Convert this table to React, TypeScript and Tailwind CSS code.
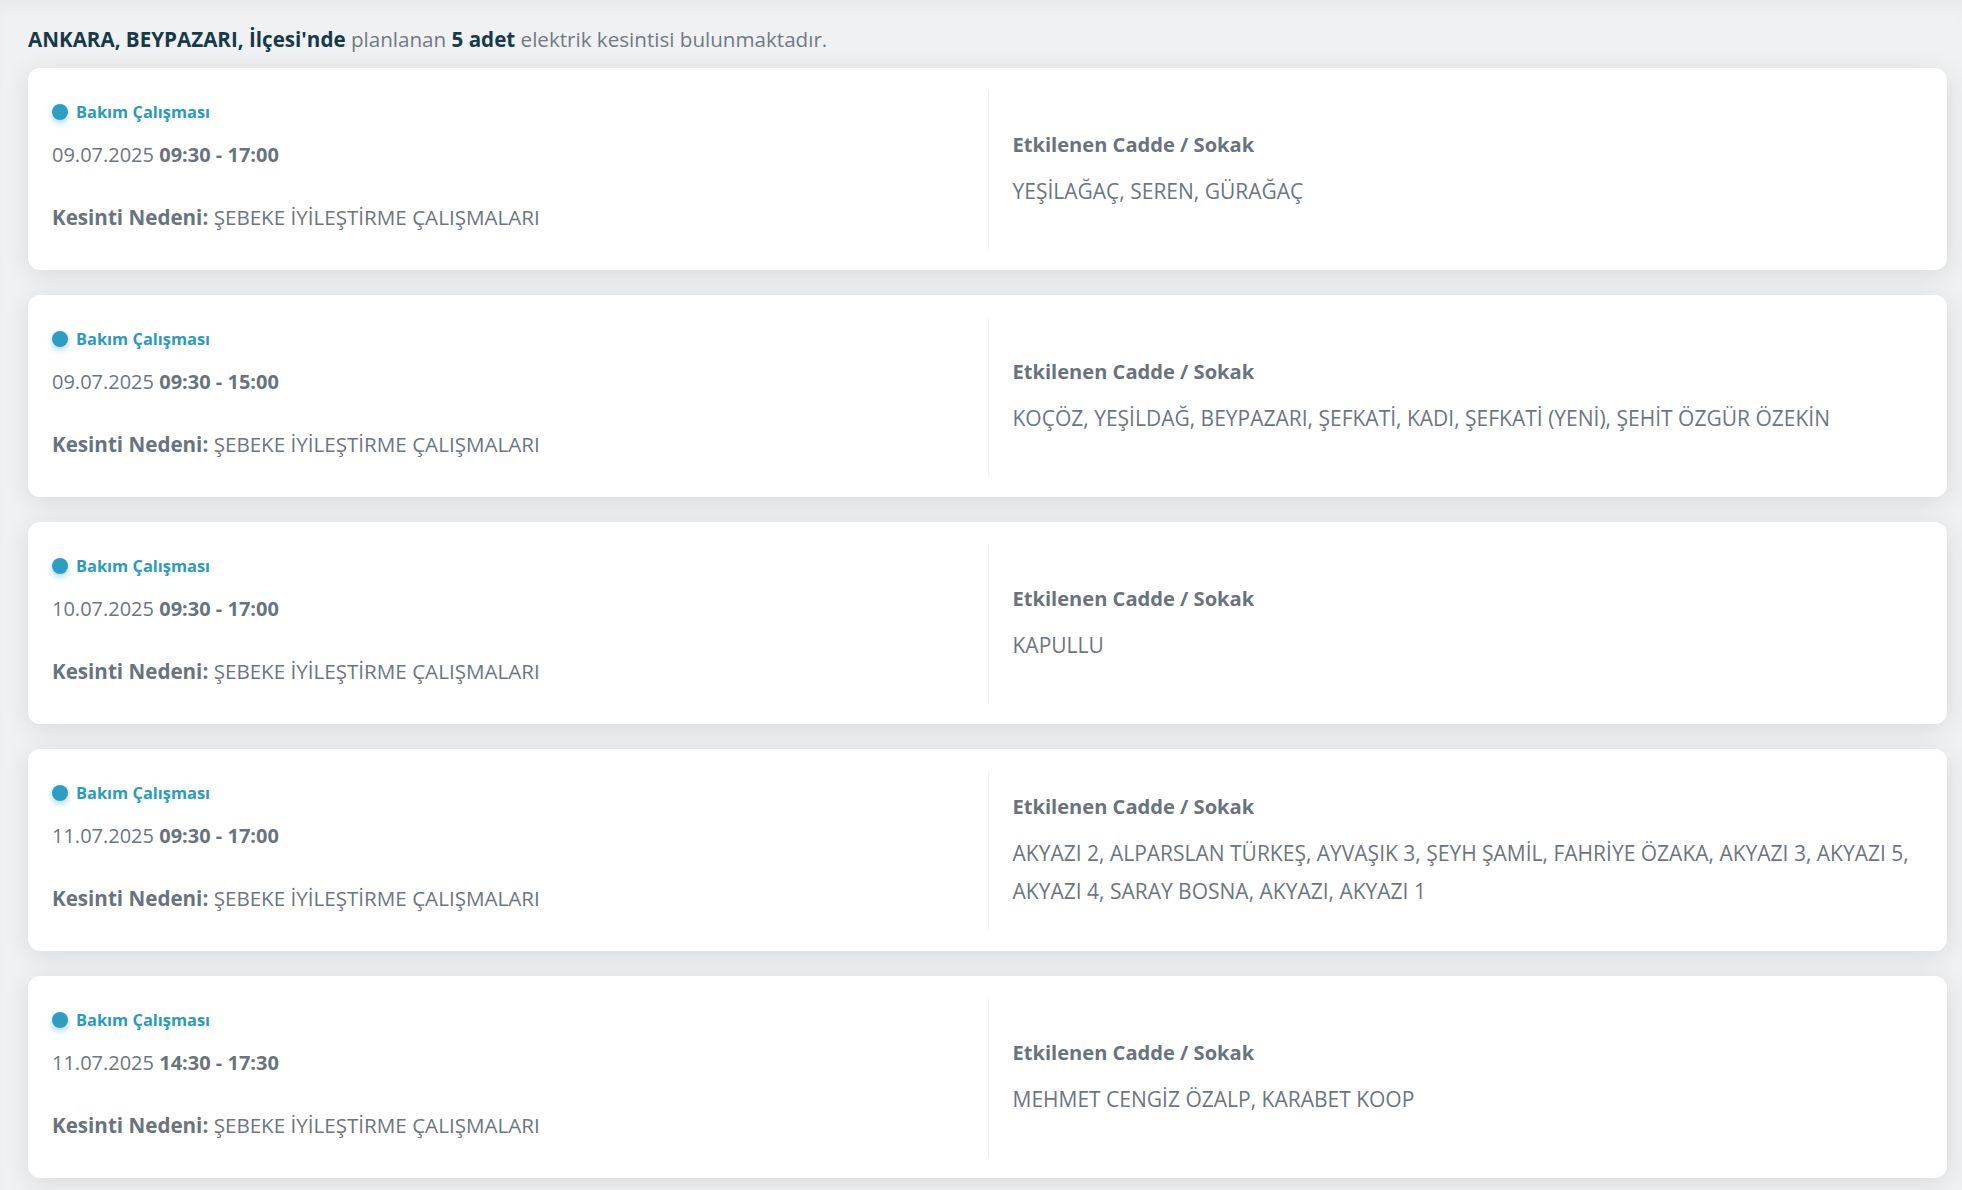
type Outage = {
  date: string;
  time: string;
  reason: string;
  streets: string;
};

const outages: Outage[] = [
  {
    date: "09.07.2025",
    time: "09:30 - 17:00",
    reason: "ŞEBEKE İYİLEŞTİRME ÇALIŞMALARI",
    streets: "YEŞİLAĞAÇ, SEREN, GÜRAĞAÇ",
  },
  {
    date: "09.07.2025",
    time: "09:30 - 15:00",
    reason: "ŞEBEKE İYİLEŞTİRME ÇALIŞMALARI",
    streets: "KOÇÖZ, YEŞİLDAĞ, BEYPAZARI, ŞEFKATİ, KADI, ŞEFKATİ (YENİ), ŞEHİT ÖZGÜR ÖZEKİN",
  },
  {
    date: "10.07.2025",
    time: "09:30 - 17:00",
    reason: "ŞEBEKE İYİLEŞTİRME ÇALIŞMALARI",
    streets: "KAPULLU",
  },
  {
    date: "11.07.2025",
    time: "09:30 - 17:00",
    reason: "ŞEBEKE İYİLEŞTİRME ÇALIŞMALARI",
    streets:
      "AKYAZI 2, ALPARSLAN TÜRKEŞ, AYVAŞIK 3, ŞEYH ŞAMİL, FAHRİYE ÖZAKA, AKYAZI 3, AKYAZI 5, AKYAZI 4, SARAY BOSNA, AKYAZI, AKYAZI 1",
  },
  {
    date: "11.07.2025",
    time: "14:30 - 17:30",
    reason: "ŞEBEKE İYİLEŞTİRME ÇALIŞMALARI",
    streets: "MEHMET CENGİZ ÖZALP, KARABET KOOP",
  },
];

function OutageCard({ item }: { item: Outage }) {
  return (
    <div className="grid grid-cols-2 rounded-xl bg-white pt-[23px] pb-[21px] shadow-[0_4px_26px_rgba(0,0,0,0.1)]">
      <div className="flex flex-col px-6 pt-[9px] pb-[17px]">
        <div className="flex h-6 items-center gap-2">
          <span className="h-4 w-4 rounded-full bg-[#2e9dc4] shadow-[0_3px_6px_rgba(46,157,196,0.4)]" />
          <span className="text-[16.4px] font-bold text-[#2a9bbf]">Bakım Çalışması</span>
        </div>
        <div className="mt-4 text-[20px] leading-[30px] text-[#6c7681]">
          {item.date} <span className="font-bold text-[#69737e]">{item.time}</span>
        </div>
        <div className="mt-8 text-[20.6px] leading-[30px] text-[#6c7681]">
          <span className="font-bold text-[#69737e]">Kesinti Nedeni:</span> {item.reason}
        </div>
      </div>
      <div className="flex flex-col justify-center border-l border-[#eef0f2] pl-6 pr-6">
        <div className="text-[20.1px] font-bold leading-[30px] text-[#69737e]">
          Etkilenen Cadde / Sokak
        </div>
        <div className="mt-3 text-[21px] leading-[38.5px] text-[#6c7681]">{item.streets}</div>
      </div>
    </div>
  );
}

export default function App() {
  return (
    <main
      className="min-h-screen bg-[#f0f1f3] pl-7 pr-[15px] pt-[25px] pb-6 shadow-[inset_0_14px_18px_-10px_rgba(0,0,0,0.05)]"
      style={{ fontFamily: '"Open Sans", "Noto Sans", sans-serif' }}
    >
      <p className="text-[20.6px] leading-[28px] text-[#6f7a85]">
        <span className="font-bold text-[#173a4b]">ANKARA, BEYPAZARI, İlçesi'nde</span> planlanan{" "}
        <span className="font-bold text-[#173a4b]">5 adet</span> elektrik kesintisi bulunmaktadır.
      </p>
      <div className="mt-[15px] flex flex-col gap-[25px]">
        {outages.map((o, i) => (
          <OutageCard key={i} item={o} />
        ))}
      </div>
    </main>
  );
}
